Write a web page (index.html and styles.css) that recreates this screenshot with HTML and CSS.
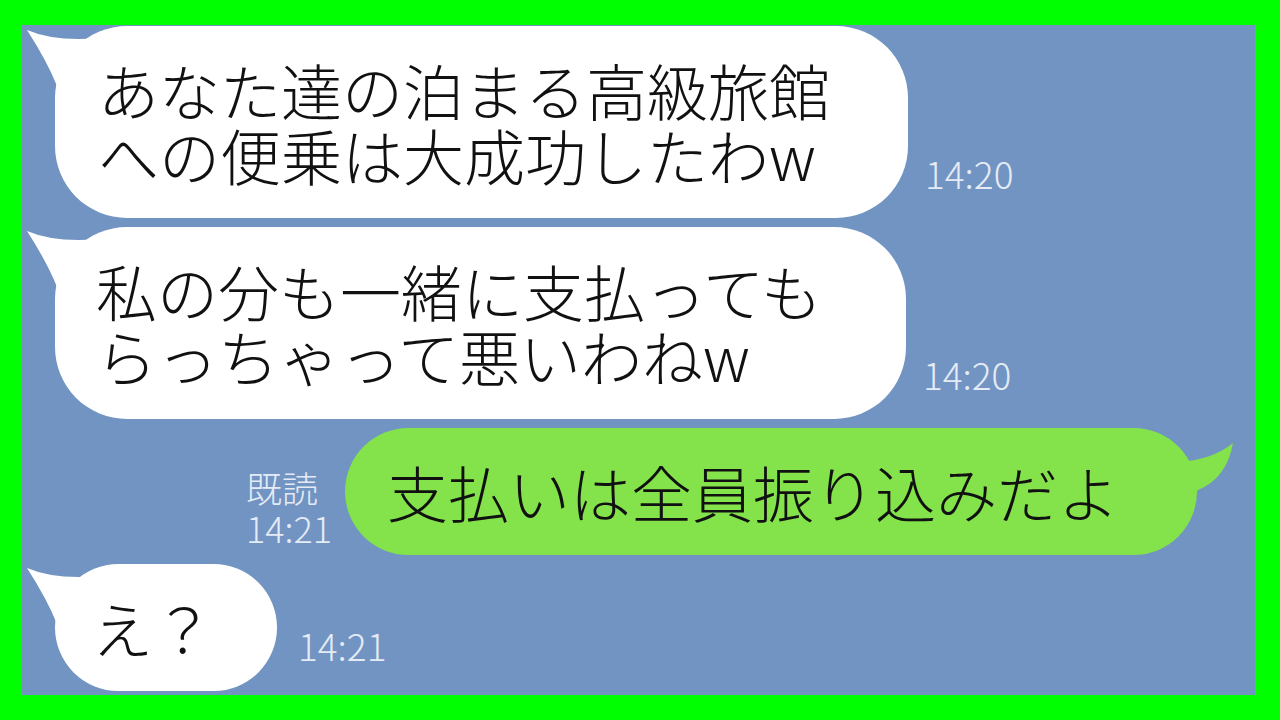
FILE: index.html
```html
<!DOCTYPE html>
<html lang="ja">
<head>
    <meta charset="UTF-8">
    <meta name="viewport" content="width=device-width, initial-scale=1.0">
    <title>トーク</title>
    <link rel="stylesheet" href="styles.css">
</head>
<body>
    <div class="chat">
        <!-- 相手のメッセージ -->
        <div class="row row-in">
            <div class="bubble bubble-in">
                <svg class="tail tail-in" viewBox="0 0 80 80"><path d="M2 4 Q30 16 75 12 L75 78 L32 60 Q22 35 2 4 Z"/></svg>
                <p>あなた達の泊まる高級旅館<br>への便乗は大成功したわw</p>
            </div>
            <span class="time">14:20</span>
        </div>

        <div class="row row-in">
            <div class="bubble bubble-in bubble-wide">
                <svg class="tail tail-in" viewBox="0 0 80 80"><path d="M2 4 Q30 16 75 12 L75 78 L32 60 Q22 35 2 4 Z"/></svg>
                <p>私の分も一緒に支払っても<br>らっちゃって悪いわねw</p>
            </div>
            <span class="time">14:20</span>
        </div>

        <!-- 自分のメッセージ -->
        <div class="row row-out">
            <span class="time read">既読<br>14:21</span>
            <div class="bubble bubble-out">
                <svg class="tail tail-out" viewBox="0 0 80 80"><path d="M76 15 Q55 32 22 34 L22 80 L41 62 Q70 50 76 15 Z"/></svg>
                <p>支払いは全員振り込みだよ</p>
            </div>
        </div>

        <div class="row row-in">
            <div class="bubble bubble-in bubble-short">
                <svg class="tail tail-in" viewBox="0 0 80 80"><path d="M2 4 Q30 16 75 12 L75 78 L32 60 Q22 35 2 4 Z"/></svg>
                <p>え？</p>
            </div>
            <span class="time time-short">14:21</span>
        </div>
    </div>
</body>
</html>
```

FILE: styles.css
```css
/* Estilos generales */
body {
    margin: 0;
    width: 1280px;
    height: 720px;
    background: #00ff00;
    font-family: "Noto Sans CJK JP", "Noto Sans", sans-serif;
    font-weight: 300;
    overflow: hidden;
}

.chat {
    margin: 25px 25px 0 22px;
    height: 670px;
    box-sizing: border-box;
    padding-top: 1px;
    background: #7294c2;
    display: flex;
    flex-direction: column;
    gap: 9px;
    overflow: hidden;
}

.row {
    display: flex;
    align-items: flex-end;
}

.row-in {
    padding-left: 33px;
}

.row-out {
    justify-content: flex-end;
    padding-right: 58px;
}

/* Burbujas */
.bubble {
    position: relative;
    padding: 31px 78px 31px 43px;
    border-radius: 72px;
    color: #111;
    font-size: 61px;
    line-height: 65px;
}

.bubble p {
    position: relative;
    margin: 0;
    white-space: nowrap;
}

.bubble-in {
    background: #ffffff;
}

.bubble-wide {
    padding-left: 41px;
    padding-right: 84px;
}

.bubble-short {
    padding-left: 37px;
    padding-right: 63px;
}

.bubble-out {
    background: #84e24a;
    padding-left: 42px;
}

.tail {
    position: absolute;
    top: 0;
    width: 80px;
    height: 80px;
}

.tail-in {
    left: -30px;
    fill: #ffffff;
}

.tail-out {
    right: -40px;
    fill: #84e24a;
}

/* Hora y leído */
.time {
    color: #e4ebf5;
    font-size: 37px;
    line-height: 40px;
    margin-left: 17px;
    margin-bottom: 25px;
    white-space: nowrap;
}

.time-short {
    margin-left: 21px;
    margin-bottom: 26px;
}

.read {
    margin: 0 13px 8px 0;
    font-size: 36px;
}
```
